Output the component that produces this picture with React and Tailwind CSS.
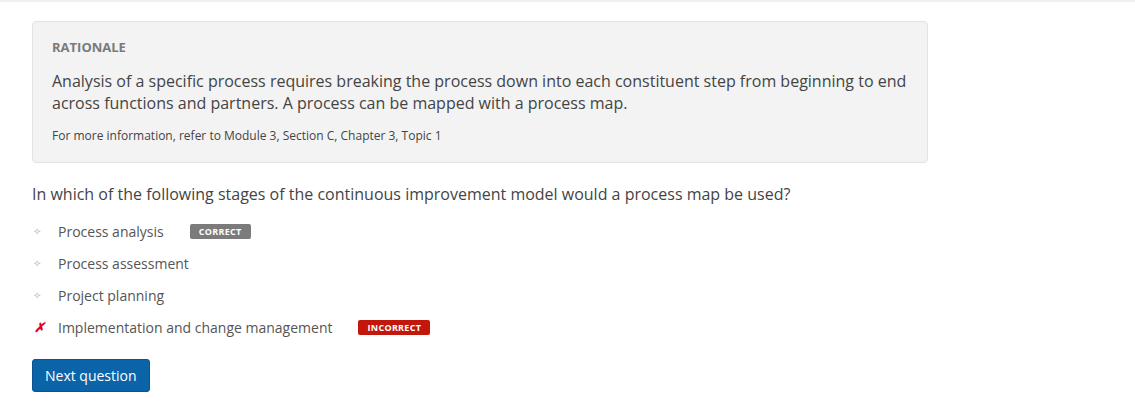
import React from 'react';

const options = [
  { label: 'Process analysis', badge: 'correct' },
  { label: 'Process assessment' },
  { label: 'Project planning' },
  { label: 'Implementation and change management', badge: 'incorrect', wrong: true },
];

const Badge = ({ type }) => {
  if (type === 'correct') {
    return (
      <span className="ml-[26px] inline-flex items-center h-[15px] px-[9px] rounded-[2px] bg-[#7b7b7b] text-white text-[9px] font-bold tracking-[0.3px] leading-none">
        CORRECT
      </span>
    );
  }
  return (
    <span className="ml-[26px] inline-flex items-center h-[15px] px-[9px] rounded-[2px] bg-[#c4170c] text-white text-[9px] font-bold tracking-[0.3px] leading-none">
      INCORRECT
    </span>
  );
};

export default function App() {
  return (
    <div className="w-[1135px] h-[407px] bg-white font-['Open_Sans',sans-serif] overflow-hidden">
      <div className="h-[2px] bg-[#eef0f4]" />

      <div className="px-[32px] pt-[19px]">
        {/* Rationale */}
        <div className="w-[896px] bg-[#f3f3f3] border border-[#e2e2e2] rounded-[4px] px-[19px] pt-4 pb-[17px]">
          <h2 className="text-[13px] leading-[18px] font-bold text-[#7a7a7a] uppercase">
            Rationale
          </h2>
          <p className="mt-[14px] text-[16px] leading-[22px] text-[#444]">
            Analysis of a specific process requires breaking the process down into each constituent step from beginning to end across functions and partners. A process can be mapped with a process map.
          </p>
          <p className="mt-[13px] text-[12px] leading-[18px] text-[#444]">
            For more information, refer to Module 3, Section C, Chapter 3, Topic 1
          </p>
        </div>

        {/* Question */}
        <p className="mt-[20px] text-[16px] leading-[22px] text-[#444]">
          In which of the following stages of the continuous improvement model would a process map be used?
        </p>

        <ul className="mt-[10px]">
          {options.map((opt) => (
            <li key={opt.label} className="flex items-center h-[32px]">
              <span className="w-[26px] flex justify-start">
                {opt.wrong ? (
                  <span className="ml-[2px] text-[13px] font-bold italic text-[#e3001b] leading-none">✗</span>
                ) : (
                  <span className="ml-[1px] text-[10px] text-[#b5b5b5] leading-none">✧</span>
                )}
              </span>
              <span className="text-[14px] text-[#555]">{opt.label}</span>
              {opt.badge && <Badge type={opt.badge} />}
            </li>
          ))}
        </ul>

        <button className="mt-[16px] h-[33px] px-[12px] rounded-[3px] bg-[#0b63a8] border border-[#0a5493] text-white text-[14px] font-medium">
          Next question
        </button>
      </div>
    </div>
  );
}
